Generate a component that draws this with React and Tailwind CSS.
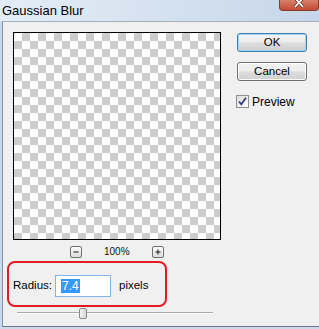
const checker =
  'bg-[image:repeating-conic-gradient(#cccccc_0_25%,#ffffff_0_50%)] bg-[length:16px_16px]'

const WinButton = ({ children, focused }) => (
  <div
    className={`w-[70px] h-[19px] rounded-[3px] flex items-center justify-center text-[11.5px] text-black border bg-[linear-gradient(#f4f4f4_0%,#ececec_48%,#dddddd_52%,#d0d0d0_100%)] ${
      focused
        ? 'border-[#3c7fb1] shadow-[inset_0_0_0_1px_#9fd6f6]'
        : 'border-[#707070] shadow-[inset_0_0_0_1px_#fbfbfb]'
    }`}
  >
    {children}
  </div>
)

const SmallButton = ({ plus }) => (
  <div className="w-[12px] h-[12px] rounded-[2px] border border-[#707070] bg-[linear-gradient(#fbfbfb,#dcdcdc)] flex items-center justify-center">
    <svg width="6" height="6" viewBox="0 0 6 6">
      <path d="M0.5 3H5.5" stroke="#111" strokeWidth="1" />
      {plus && <path d="M3 0.5V5.5" stroke="#111" strokeWidth="1" />}
    </svg>
  </div>
)

export default function App() {
  return (
    <div className="relative w-[319px] h-[329px] overflow-hidden bg-[#cbd9ea] font-['Liberation_Sans',Arial,sans-serif]">
      {/* title bar */}
      <div className="h-[21px] pl-[2px] pb-[1px] flex items-center bg-[linear-gradient(90deg,#e4edf7,#d2dfee_60%,#c6d6ea)]">
        <span className="text-[13px] text-black leading-none">Gaussian Blur</span>
      </div>
      <div className="absolute top-0 left-[279px] w-[40px] h-[11px] rounded-b-[4px] border border-t-0 border-[#8c3a2c] bg-[linear-gradient(#d9806a,#c24a33)] flex items-end justify-center pb-[1px]">
        <svg width="12" height="9" viewBox="0 0 12 9">
          <path d="M2 -2 L10 7 M10 -2 L2 7" stroke="#5a2a22" strokeWidth="3.2" />
          <path d="M2 -2 L10 7 M10 -2 L2 7" stroke="#ffffff" strokeWidth="1.8" />
        </svg>
      </div>

      {/* body */}
      <div className="ml-[2px] h-[306px] border-t border-l border-b border-t-[#a3afbf] border-l-[#8391a5] border-b-[#6b7686] bg-[#f0f0f0] flex">
        {/* left column */}
        <div className="w-[218px] pl-[4px] pt-[10px] flex flex-col">
          <div className="ml-[6px] w-[208px] h-[208px] border border-black">
            <div className={`w-full h-full ${checker}`} />
          </div>
          <div className="ml-[6px] w-[208px] mt-[6px] h-[12px] flex items-center justify-center">
            <SmallButton />
            <span className="ml-[22px] w-[24px] text-[10px] text-[#111] text-center leading-none">100%</span>
            <div className="ml-[24px]">
              <SmallButton plus />
            </div>
          </div>
          <div className="mt-[3px] w-[160px] h-[46px] border-2 border-[#e31c24] rounded-[8px] pl-[4px] pt-[12px]">
            <div className="flex items-center h-[22px]">
              <span className="text-[11.5px] text-black">Radius:</span>
              <div className="ml-[3px] w-[56px] h-[22px] border border-[#7fb4e8] bg-white flex items-center pl-[5px]">
                <span className="bg-[#3399ff] text-white text-[12px] leading-[14px] px-[1px]">7.4</span>
              </div>
              <span className="ml-[8px] text-[11.5px] text-black">pixels</span>
            </div>
          </div>
          <div className="relative ml-[10px] w-[196px] h-[11px] mt-[1px]">
            <div className="absolute top-[4px] left-0 right-0 h-[1px] bg-[#a9a9a9]" />
            <div className="absolute top-[5px] left-0 right-0 h-[1px] bg-[#ffffff]" />
            <div className="absolute top-0 left-[62px] w-[8px] h-[11px] rounded-[2px] border border-[#8a8a8a] bg-[linear-gradient(90deg,#f4f4f4,#d6d6d6)]" />
          </div>
        </div>

        {/* right column */}
        <div className="ml-[16px] pt-[11px] flex flex-col">
          <WinButton focused>OK</WinButton>
          <div className="mt-[10px]">
            <WinButton>Cancel</WinButton>
          </div>
          <div className="mt-[14px] -ml-[1px] flex items-center">
            <div className="w-[13px] h-[13px] border border-[#8e8f8f] bg-[linear-gradient(135deg,#dcdcdc,#ffffff)] flex items-center justify-center">
              <svg width="11" height="11" viewBox="0 0 11 11">
                <path d="M2 5.5 L4.3 8.3 L9 1.8" stroke="#2f3f82" strokeWidth="1.8" fill="none" />
              </svg>
            </div>
            <span className="ml-[3px] text-[12px] text-black leading-none">Preview</span>
          </div>
        </div>
      </div>
    </div>
  )
}
